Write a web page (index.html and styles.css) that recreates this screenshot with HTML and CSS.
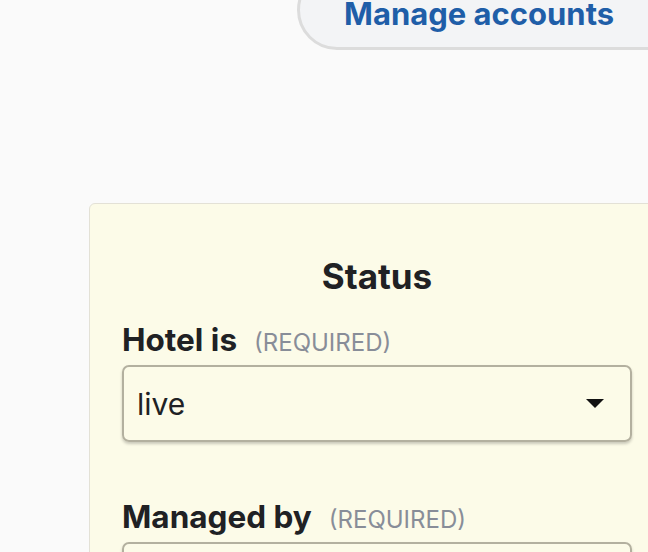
FILE: index.html
```html
<!DOCTYPE html>
<html>
<head>
<meta charset="utf-8">
<link rel="stylesheet" href="styles.css">
</head>
<body>
<div class="page">
  <div class="topbar">
    <a class="manage-btn">Manage accounts</a>
  </div>
  <section class="card">
    <h2 class="card-title">Status</h2>
    <div class="field">
      <label class="label">Hotel is<span class="req">(REQUIRED)</span></label>
      <div class="select">
        <span class="select-value">live</span>
        <svg class="caret" width="18" height="9" viewBox="0 0 18 9"><path d="M0 0 L18 0 L9 9 Z" fill="#111"/></svg>
      </div>
    </div>
    <div class="field field-next">
      <label class="label">Managed by<span class="req">(REQUIRED)</span></label>
      <div class="select"></div>
    </div>
  </section>
</div>
</body>
</html>
```
FILE: styles.css
```css
html, body {
  margin: 0;
  padding: 0;
  background: #fafafa;
  font-family: Inter, "Noto Sans", sans-serif;
  color: #202124;
  overflow: hidden;
}
.page {
  width: 648px;
  height: 552px;
  overflow: hidden;
}
.topbar {
  display: flex;
  padding-left: 297px;
  margin-top: -30px;
}
.manage-btn {
  display: block;
  flex: none;
  width: 400px;
  height: 80px;
  box-sizing: border-box;
  border: 3px solid #dcdcdc;
  border-radius: 40px;
  background: #f3f4f6;
  color: #1f5ea8;
  font-weight: 700;
  font-size: 31px;
  line-height: 31px;
  padding: 25px 0 0 44px;
}
.card {
  margin: 153px 0 0 89px;
  width: 576px;
  height: 400px;
  box-sizing: border-box;
  background: #fcfbe8;
  border: 1px solid #e3e1d6;
  border-radius: 6px;
  padding: 52px 32px 0 32px;
}
.card-title {
  margin: 0;
  text-align: center;
  font-size: 35px;
  font-weight: 700;
  line-height: 40px;
}
.field {
  margin-top: 26px;
}
.field-next {
  margin-top: 57px;
}
.label {
  display: block;
  font-size: 31.5px;
  font-weight: 700;
  line-height: 36px;
  margin-bottom: 4px;
}
.req {
  font-size: 24px;
  font-weight: 400;
  color: #888d98;
  margin-left: 17px;
}
.select {
  display: flex;
  align-items: center;
  justify-content: space-between;
  height: 77px;
  box-sizing: border-box;
  border: 2px solid #b3b09f;
  border-radius: 7px;
  box-shadow: 0 2px 3px rgba(0,0,0,0.2);
  padding: 0 26px 0 13px;
}
.select-value {
  font-size: 30px;
  font-weight: 400;
  color: #202124;
}
.caret {
  display: block;
}
```
